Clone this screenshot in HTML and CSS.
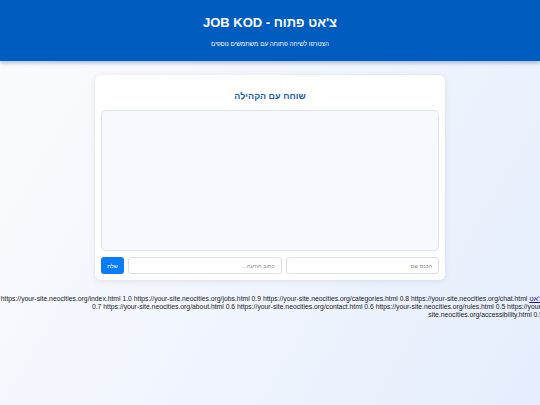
FILE: index.html
```html
<!DOCTYPE html>
<html lang="he" dir="rtl">
<head>
<meta charset="utf-8">
<title>צ'אט פתוח - JOB KOD</title>
<link rel="stylesheet" href="styles.css">
</head>
<body>
<header class="site-header">
  <h1 class="site-title">צ'אט פתוח - JOB KOD</h1>
  <p class="site-subtitle">הצטרפו לשיחה פתוחה עם משתמשים נוספים</p>
</header>
<main class="main">
  <section class="chat-card">
    <h2 class="chat-title">שוחח עם הקהילה</h2>
    <div class="chat-messages"></div>
    <form class="chat-form">
      <input class="chat-input name-input" type="text" placeholder="הכנס שם">
      <input class="chat-input msg-input" type="text" placeholder="כתוב הודעה...">
      <button class="send-btn" type="button">שלח</button>
    </form>
  </section>
</main>
<div class="sitemap"><a href="#" class="sitemap-link">צ'אט</a> https://your-site.neocities.org/index.html 1.0 https://your-site.neocities.org/jobs.html 0.9 https://your-site.neocities.org/categories.html 0.8 https://your-site.neocities.org/chat.html 0.7 https://your-site.neocities.org/about.html 0.6 https://your-site.neocities.org/contact.html 0.6 https://your-site.neocities.org/rules.html 0.5 https://your-site.neocities.org/accessibility.html 0.5</div>
</body>
</html>
```
FILE: styles.css
```css
* { box-sizing: border-box; }
html, body { margin: 0; padding: 0; }
body {
  font-family: "Liberation Sans", Arial, sans-serif;
  background: linear-gradient(120deg, #fbfcfe 0%, #f1f5fd 50%, #e5eefd 100%);
  min-height: 405px;
  color: #222;
  overflow-x: hidden;
}
.site-header {
  background: #005cbf;
  color: #fff;
  text-align: center;
  height: 61px;
  padding-top: 14px;
  box-shadow: 0 2px 4px rgba(0, 40, 120, 0.3);
}
.site-title {
  margin: 0;
  font-size: 13px;
  font-weight: bold;
  line-height: 18px;
}
.site-subtitle {
  margin: 8px 0 0;
  font-size: 6.3px;
  line-height: 8px;
}
.main {
  padding: 14px 0 0;
  display: flex;
  justify-content: center;
}
.chat-card {
  width: 350px;
  background: #fff;
  border-radius: 6px;
  box-shadow: 0 1px 6px rgba(0, 0, 0, 0.1);
  padding: 14px 6px 6px;
}
.chat-title {
  margin: 0 0 6px;
  text-align: center;
  color: #1a5cb0;
  font-size: 9px;
  line-height: 15px;
  font-weight: bold;
}
.chat-messages {
  height: 141px;
  background: #f6f9fe;
  border: 1px solid #dfe3ea;
  border-radius: 5px;
}
.chat-form {
  display: flex;
  gap: 4px;
  margin-top: 6px;
}
.chat-input {
  flex: 1;
  height: 17px;
  border: 1px solid #dcdfe4;
  border-radius: 3px;
  padding: 0 6px;
  font-family: inherit;
  font-size: 5.5px;
  background: #fff;
  min-width: 0;
}
.chat-input::placeholder { color: #888; }
.send-btn {
  width: 23px;
  height: 17px;
  border: 0;
  border-radius: 3px;
  background: #0a7cf5;
  color: #fff;
  font-family: inherit;
  font-size: 5.5px;
  padding: 0;
}
.sitemap {
  margin-top: 15px;
  margin-right: -3px;
  font-size: 6.8px;
  line-height: 8px;
  color: #222;
  text-align: right;
}
.sitemap-link { color: #1a0dab; }
```
